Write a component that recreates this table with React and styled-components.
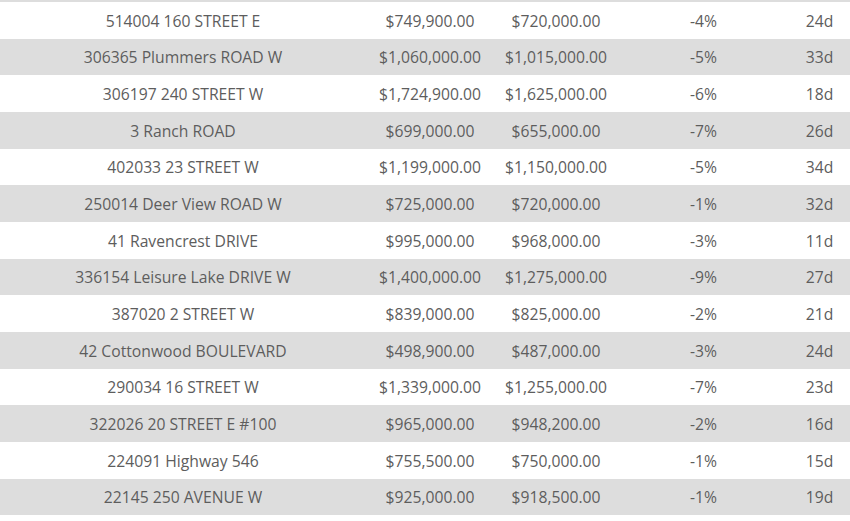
import React from 'react';
import styled, { createGlobalStyle } from 'styled-components';

const GlobalStyle = createGlobalStyle`
  html, body {
    margin: 0;
    padding: 0;
    background: #ffffff;
    overflow: hidden;
  }
`;

const listings = [
  ['514004 160 STREET E', '$749,900.00', '$720,000.00', '-4%', '24d'],
  ['306365 Plummers ROAD W', '$1,060,000.00', '$1,015,000.00', '-5%', '33d'],
  ['306197 240 STREET W', '$1,724,900.00', '$1,625,000.00', '-6%', '18d'],
  ['3 Ranch ROAD', '$699,000.00', '$655,000.00', '-7%', '26d'],
  ['402033 23 STREET W', '$1,199,000.00', '$1,150,000.00', '-5%', '34d'],
  ['250014 Deer View ROAD W', '$725,000.00', '$720,000.00', '-1%', '32d'],
  ['41 Ravencrest DRIVE', '$995,000.00', '$968,000.00', '-3%', '11d'],
  ['336154 Leisure Lake DRIVE W', '$1,400,000.00', '$1,275,000.00', '-9%', '27d'],
  ['387020 2 STREET W', '$839,000.00', '$825,000.00', '-2%', '21d'],
  ['42 Cottonwood BOULEVARD', '$498,900.00', '$487,000.00', '-3%', '24d'],
  ['290034 16 STREET W', '$1,339,000.00', '$1,255,000.00', '-7%', '23d'],
  ['322026 20 STREET E #100', '$965,000.00', '$948,200.00', '-2%', '16d'],
  ['224091 Highway 546', '$755,500.00', '$750,000.00', '-1%', '15d'],
  ['22145 250 AVENUE W', '$925,000.00', '$918,500.00', '-1%', '19d'],
];

function SoldTable() {
  return (
    <TableStyled>
      {listings.map((row, i) => (
        <Row key={row[0]} $shaded={i % 2 === 1}>
          {row.map((cell, j) => (
            <Cell key={j}>{cell}</Cell>
          ))}
        </Row>
      ))}
    </TableStyled>
  );
}

export default function App() {
  return (
    <>
      <GlobalStyle />
      <SoldTable />
    </>
  );
}

const TableStyled = styled.div`
  width: 850px;
  /* bottom edge of the previous (shaded) row peeks in at the top */
  border-top: 2.7px solid #dddddd;
  font-family: 'Open Sans', 'Liberation Sans', sans-serif;
  font-size: 15.7px;
  color: #5d5d5d;
`;

const Row = styled.div`
  display: grid;
  grid-template-columns: 366px 128px 124px 171px 61px;
  height: 36.67px;
  align-items: center;
  background: ${(p) => (p.$shaded ? '#dddddd' : '#ffffff')};
`;

const Cell = styled.div`
  text-align: center;
  white-space: nowrap;
  padding-top: 1px;
`;
